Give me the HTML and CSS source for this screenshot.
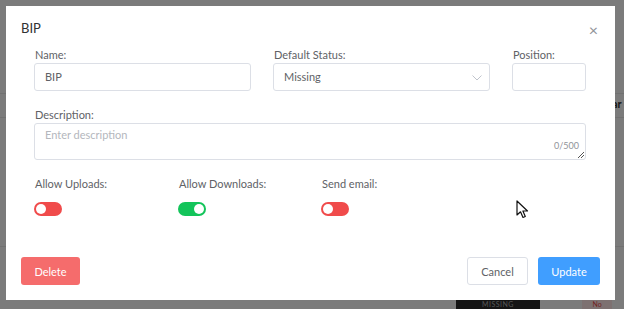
FILE: index.html
```html
<!DOCTYPE html>
<html>
<head>
<meta charset="utf-8">
<link rel="stylesheet" href="styles.css">
</head>
<body>
<div class="page">
  <div class="bg-line l1"></div>
  <div class="bg-line l2"></div>
  <div class="bg-line l3"></div>
  <div class="bg-text">ar</div>
  <div class="bg-missing">MISSING</div>
  <div class="bg-no">No</div>
</div>
<div class="overlay"></div>
<div class="dialog">
  <div class="header">
    <span class="title">BIP</span>
    <span class="close">×</span>
  </div>
  <div class="row top-row">
    <div class="field f-name">
      <label>Name:</label>
      <div class="input">BIP</div>
    </div>
    <div class="field f-status">
      <label>Default Status:</label>
      <div class="input select">Missing
        <svg class="chev" width="10" height="6" viewBox="0 0 10 6"><path d="M0.5 0.5 L5 5 L9.5 0.5" fill="none" stroke="#c0c4cc" stroke-width="1"/></svg>
      </div>
    </div>
    <div class="field f-pos">
      <label>Position:</label>
      <div class="input"></div>
    </div>
  </div>
  <div class="field f-desc">
    <label>Description:</label>
    <div class="textarea">
      <span class="ph">Enter description</span>
      <span class="count">0/500</span>
      <svg class="grip" width="6" height="6" viewBox="0 0 6 6"><path d="M0 6 L6 0 M3 6 L6 3" stroke="#555" stroke-width="1"/></svg>
    </div>
  </div>
  <div class="switches">
    <div class="sw-field">
      <label>Allow Uploads:</label>
      <span class="switch off"></span>
    </div>
    <div class="sw-field">
      <label>Allow Downloads:</label>
      <span class="switch on"></span>
    </div>
    <div class="sw-field">
      <label>Send email:</label>
      <span class="switch off"></span>
    </div>
  </div>
  <div class="footer">
    <button class="btn delete">Delete</button>
    <div class="right">
      <button class="btn cancel">Cancel</button>
      <button class="btn update">Update</button>
    </div>
  </div>
  <svg class="cursor" width="14" height="20" viewBox="0 0 14 20"><path d="M1 1 L1 15 L4.5 11.8 L7 17.5 L9.3 16.5 L6.9 11 L11.5 11 Z" fill="#fff" stroke="#111" stroke-width="1.2" stroke-linejoin="round"/></svg>
</div>
</body>
</html>
```
FILE: styles.css
```css
* { box-sizing: border-box; }
html, body { margin: 0; padding: 0; }
body {
  width: 624px;
  height: 309px;
  overflow: hidden;
  background: #7b7b7b;
  font-family: Lato, "Noto Sans", sans-serif;
  position: relative;
}
.page { position: absolute; inset: 0; background: #f6f6f6; }
.overlay { position: absolute; inset: 0; background: rgba(0,0,0,0.5); }
.bg-line { position: absolute; left: 0; right: 0; height: 1px; background: #e2e2e2; }
.l1 { top: 93px; }
.l2 { top: 117px; }
.l3 { top: 246px; }
.bg-text { position: absolute; left: 612px; top: 97px; font-size: 11px; font-weight: 700; color: #333; }
.bg-missing {
  position: absolute; left: 456px; top: 300px; width: 84px; height: 9px;
  background: #2a2a2a; color: #aaa; font-size: 7px; text-align: center; line-height: 9px; letter-spacing: 0.5px;
  overflow: hidden;
}
.bg-no {
  position: absolute; left: 582px; top: 300px; width: 30px; height: 9px;
  background: #fbe3e3; color: #e64545; font-size: 7px; text-align: center; line-height: 9px;
  overflow: hidden;
}

.dialog {
  position: absolute;
  left: 6px; top: 6px;
  width: 609px; height: 294px;
  background: #fff;
  padding: 14px 15px 0 15px;
}
.header { display: flex; justify-content: space-between; align-items: center; height: 16px; }
.title { font-size: 13px; color: #303133; }
.close { font-size: 16px; color: #909399; margin-right: 2px; margin-top: 2px; }

label { display: block; font-size: 11px; color: #606266; line-height: 13px; }
.row { display: flex; }
.top-row { margin-top: 12px; padding-left: 13px; gap: 22px; }
.field label { margin-bottom: 2px; padding-left: 1px; }
.f-name { width: 217px; }
.f-status { width: 217px; }
.f-pos { width: 74px; }
.input {
  height: 28px;
  border: 1px solid #dcdfe6;
  border-radius: 3px;
  font-size: 11px;
  color: #606266;
  padding: 0 10px;
  line-height: 26px;
  position: relative;
}
.select .chev { position: absolute; right: 7px; top: 11px; }

.f-desc { margin-top: 17px; margin-left: 13px; width: 552px; }
.textarea {
  position: relative;
  height: 37px;
  border: 1px solid #dcdfe6;
  border-radius: 3px;
  padding: 4px 10px;
  font-size: 11px;
}
.ph { color: #b4b7bd; }
.count { position: absolute; right: 6px; bottom: 8px; font-size: 9px; color: #909399; }
.grip { position: absolute; right: 1px; bottom: 1px; }

.switches { display: grid; grid-template-columns: 144px 143px 143px; margin: 17px 0 0 13px; }
.sw-field label { padding-left: 1px; }
.switch {
  display: block;
  margin-top: 12px;
  width: 28px; height: 14px;
  border-radius: 7px;
  position: relative;
}
.switch::after {
  content: ""; position: absolute; top: 2px; width: 10px; height: 10px; border-radius: 50%; background: #fff;
}
.switch.off { background: #f04b4b; }
.switch.off::after { left: 2px; }
.switch.on { background: #13c45a; }
.switch.on::after { right: 2px; }

.footer { display: flex; justify-content: space-between; margin-top: 41px; }
.right { display: flex; gap: 10px; }
.btn {
  height: 28px;
  border-radius: 3px;
  font-family: inherit;
  font-size: 11px;
  border: 1px solid transparent;
  padding: 0;
  cursor: pointer;
}
.delete { width: 59px; background: #f56c6c; color: #fff; }
.cancel { width: 61px; background: #fff; border-color: #dcdfe6; color: #606266; }
.update { width: 62px; background: #409eff; color: #fff; }
.cursor { position: absolute; left: 510px; top: 194px; }
```
